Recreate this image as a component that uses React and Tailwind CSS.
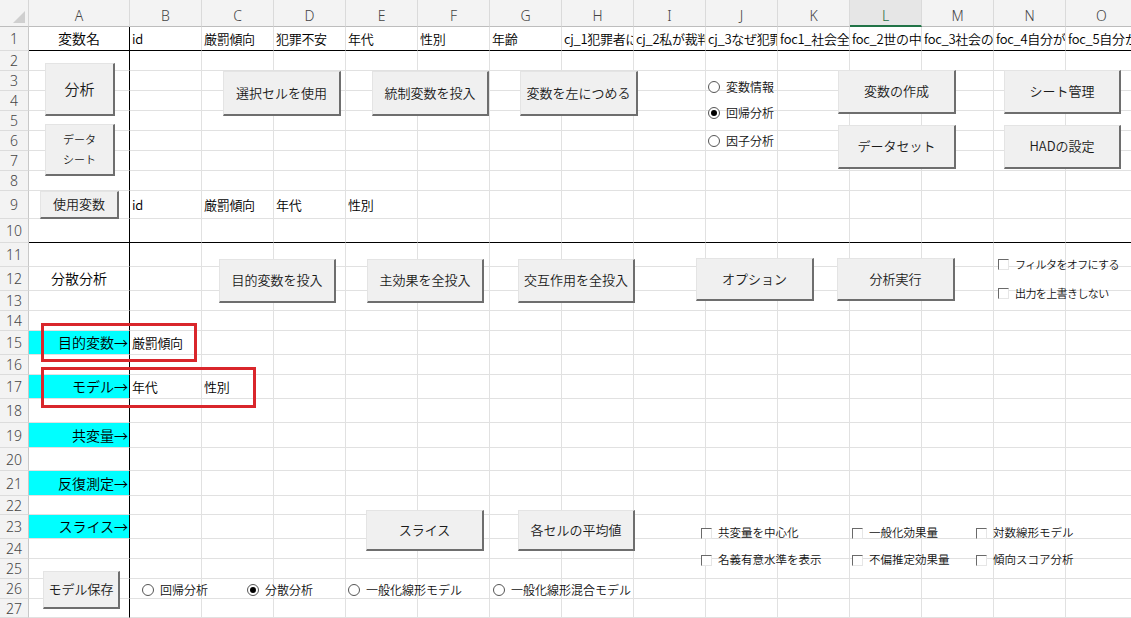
import React from 'react';

const COLS = ['A', 'B', 'C', 'D', 'E', 'F', 'G', 'H', 'I', 'J', 'K', 'L', 'M', 'N', 'O'];

// row heights follow the sheet, row 1 .. 27
const ROWS = [
  { h: 'h-[24px]', cells: { A: '変数名', B: 'id', C: '厳罰傾向', D: '犯罪不安', E: '年代', F: '性別', G: '年齢', H: 'cj_1犯罪者に', I: 'cj_2私が裁判', J: 'cj_3なぜ犯罪', K: 'foc1_社会全', L: 'foc_2世の中', M: 'foc_3社会の', N: 'foc_4自分が', O: 'foc_5自分か' } },
  { h: 'h-[20px]', cells: {} },
  { h: 'h-[20px]', cells: {} },
  { h: 'h-[20px]', cells: {} },
  { h: 'h-[20px]', cells: {} },
  { h: 'h-[20px]', cells: {} },
  { h: 'h-[20px]', cells: {} },
  { h: 'h-[20px]', cells: {} },
  { h: 'h-[28px]', cells: { B: 'id', C: '厳罰傾向', D: '年代', E: '性別' } },
  { h: 'h-[24px]', cells: {} },
  { h: 'h-[24px]', cells: {} },
  { h: 'h-[24px]', cells: { A: '分散分析' } },
  { h: 'h-[20px]', cells: {} },
  { h: 'h-[20px]', cells: {} },
  { h: 'h-[24px]', cells: { A: '目的変数→', B: '厳罰傾向' } },
  { h: 'h-[20px]', cells: {} },
  { h: 'h-[24px]', cells: { A: 'モデル→', B: '年代', C: '性別' } },
  { h: 'h-[24px]', cells: {} },
  { h: 'h-[25px]', cells: { A: '共変量→' } },
  { h: 'h-[23px]', cells: {} },
  { h: 'h-[25px]', cells: { A: '反復測定→' } },
  { h: 'h-[19px]', cells: {} },
  { h: 'h-[24px]', cells: { A: 'スライス→' } },
  { h: 'h-[20px]', cells: {} },
  { h: 'h-[20px]', cells: {} },
  { h: 'h-[20px]', cells: {} },
  { h: 'h-[19px]', cells: {} },
];

const CYAN_ROWS = [15, 17, 19, 21, 23];

const BUTTONS = [
  { pos: 'left-[45px] top-[63px] w-[70px] h-[53px] text-[15px]', label: '分析' },
  { pos: 'left-[45px] top-[124px] w-[70px] h-[52px] text-[11px]', label: 'データ', label2: 'シート' },
  { pos: 'left-[40px] top-[191px] w-[79px] h-[28px] text-[13px]', label: '使用変数' },
  { pos: 'left-[223px] top-[71px] w-[118px] h-[45px] text-[13px]', label: '選択セルを使用' },
  { pos: 'left-[372px] top-[71px] w-[117px] h-[45px] text-[13px]', label: '統制変数を投入' },
  { pos: 'left-[520px] top-[71px] w-[118px] h-[45px] text-[13px]', label: '変数を左につめる' },
  { pos: 'left-[838px] top-[70px] w-[118px] h-[44px] text-[13px]', label: '変数の作成' },
  { pos: 'left-[1004px] top-[70px] w-[117px] h-[44px] text-[13px]', label: 'シート管理' },
  { pos: 'left-[838px] top-[125px] w-[118px] h-[44px] text-[13px]', label: 'データセット' },
  { pos: 'left-[1004px] top-[125px] w-[117px] h-[44px] text-[13px]', label: 'HADの設定' },
  { pos: 'left-[219px] top-[259px] w-[117px] h-[44px] text-[13px]', label: '目的変数を投入' },
  { pos: 'left-[367px] top-[259px] w-[117px] h-[44px] text-[13px]', label: '主効果を全投入' },
  { pos: 'left-[518px] top-[259px] w-[117px] h-[44px] text-[13px]', label: '交互作用を全投入' },
  { pos: 'left-[696px] top-[258px] w-[118px] h-[43px] text-[13px]', label: 'オプション' },
  { pos: 'left-[837px] top-[258px] w-[118px] h-[43px] text-[13px]', label: '分析実行' },
  { pos: 'left-[366px] top-[510px] w-[118px] h-[41px] text-[13px]', label: 'スライス' },
  { pos: 'left-[518px] top-[510px] w-[117px] h-[41px] text-[13px]', label: '各セルの平均値' },
  { pos: 'left-[43px] top-[571px] w-[77px] h-[38px] text-[13px]', label: 'モデル保存' },
];

const RADIOS = [
  { pos: 'left-[708px] top-[79px]', label: '変数情報' },
  { pos: 'left-[708px] top-[105px]', label: '回帰分析', on: true },
  { pos: 'left-[708px] top-[133px]', label: '因子分析' },
  { pos: 'left-[142px] top-[582px]', label: '回帰分析' },
  { pos: 'left-[247px] top-[582px]', label: '分散分析', on: true },
  { pos: 'left-[348px] top-[582px]', label: '一般化線形モデル' },
  { pos: 'left-[493px] top-[582px]', label: '一般化線形混合モデル' },
];

const CHECKS = [
  { pos: 'left-[998px] top-[256px]', label: 'フィルタをオフにする', tight: true },
  { pos: 'left-[998px] top-[285px]', label: '出力を上書きしない', tight: true },
  { pos: 'left-[701px] top-[525px]', label: '共変量を中心化' },
  { pos: 'left-[701px] top-[552px]', label: '名義有意水準を表示' },
  { pos: 'left-[852px] top-[525px]', label: '一般化効果量' },
  { pos: 'left-[852px] top-[552px]', label: '不偏推定効果量' },
  { pos: 'left-[976px] top-[525px]', label: '対数線形モデル' },
  { pos: 'left-[976px] top-[552px]', label: '傾向スコア分析' },
];

function Cell({ col, row, value }) {
  const isA = col === 'A';
  const cyan = isA && CYAN_ROWS.includes(row);
  const thickBottom = row === 1 || row === 10;
  let cls = 'shrink-0 h-full overflow-hidden whitespace-nowrap flex items-center border-b border-r ';
  cls += isA ? 'w-[101px] border-r-black ' : 'w-[72px] border-r-[#e1e1e1] ';
  cls += thickBottom ? 'border-b-black ' : 'border-b-[#e1e1e1] ';
  if (cyan) cls += 'bg-[#00ffff] justify-end pr-[1px] text-[14px] ';
  else if (isA) cls += 'justify-center text-[14px] ';
  else cls += 'pl-[2px] text-[13px] tracking-[-0.3px] ';
  return <div className={cls}>{value}</div>;
}

function Button({ pos, label, label2 }) {
  return (
    <div className={`absolute ${pos} flex flex-col items-center justify-center bg-[#f0f0f0] border-t border-l border-t-[#e4e4e4] border-l-[#e4e4e4] border-r-2 border-b-2 border-r-[#6e6e6e] border-b-[#6e6e6e] text-[#1a1a1a] leading-tight`}>
      <span>{label}</span>
      {label2 && <span className="mt-[6px]">{label2}</span>}
    </div>
  );
}

function Radio({ pos, label, on }) {
  return (
    <div className={`absolute ${pos} h-[16px] flex items-center gap-[6px] text-[12px] text-[#111] whitespace-nowrap`}>
      <span className="w-[12px] h-[12px] rounded-full border border-[#555] bg-white flex items-center justify-center">
        {on && <span className="w-[6px] h-[6px] rounded-full bg-black" />}
      </span>
      <span>{label}</span>
    </div>
  );
}

function Check({ pos, label, tight }) {
  return (
    <div className={`absolute ${pos} h-[16px] flex items-center gap-[6px] text-[#111] whitespace-nowrap ${tight ? 'text-[11px] tracking-[-0.6px]' : 'text-[11.5px]'}`}>
      <span className="w-[11px] h-[11px] bg-white border-t border-l border-t-[#6a6a6a] border-l-[#6a6a6a] border-r border-b border-r-[#e6e6e6] border-b-[#e6e6e6]" />
      <span>{label}</span>
    </div>
  );
}

export default function App() {
  return (
    <div className="relative w-[1131px] h-[618px] overflow-hidden bg-white font-['Noto_Sans_CJK_JP',sans-serif] font-[350] text-black">
      {/* column headers */}
      <div className="flex h-[27px]">
        <div className="shrink-0 w-[29px] h-full bg-[#f3f3f3] border-r border-b border-r-[#d6d6d6] border-b-[#bdbdbd] flex items-end justify-end p-[3px]">
          <svg width="12" height="12" viewBox="0 0 12 12">
            <polygon points="12,0 12,12 0,12" fill="#cfcfcf" />
          </svg>
        </div>
        {COLS.map((c) => (
          <div
            key={c}
            className={
              'shrink-0 h-full pt-[5px] flex items-center justify-center text-[14px] font-["Noto_Sans",sans-serif] border-r border-r-[#dadada] ' +
              (c === 'A' ? 'w-[101px] ' : 'w-[72px] ') +
              (c === 'L'
                ? 'bg-[#e6e6e6] border-b-2 border-b-[#217346] text-[#1d6b40]'
                : 'bg-[#f3f3f3] border-b border-b-[#bdbdbd] text-[#444]')
            }
          >
            {c}
          </div>
        ))}
      </div>

      {/* rows */}
      {ROWS.map((r, i) => (
        <div key={i} className={`flex ${r.h}`}>
          <div className="shrink-0 w-[29px] h-full bg-[#f3f3f3] border-r border-b border-r-[#c8c8c8] border-b-[#dcdcdc] flex items-center justify-center text-[14px] text-[#444] font-['Noto_Sans',sans-serif]">
            {i + 1}
          </div>
          {COLS.map((c) => (
            <Cell key={c} col={c} row={i + 1} value={r.cells[c]} />
          ))}
        </div>
      ))}

      {/* form controls floating on the sheet */}
      {BUTTONS.map((b, i) => (
        <Button key={i} {...b} />
      ))}
      {RADIOS.map((r, i) => (
        <Radio key={i} {...r} />
      ))}
      {CHECKS.map((c, i) => (
        <Check key={i} {...c} />
      ))}

      {/* red highlight boxes */}
      <div className="absolute left-[41px] top-[323px] w-[156px] h-[39px] border-[3px] border-[#d9262b]" />
      <div className="absolute left-[41px] top-[367px] w-[215px] h-[41px] border-[3px] border-[#d9262b]" />
    </div>
  );
}
